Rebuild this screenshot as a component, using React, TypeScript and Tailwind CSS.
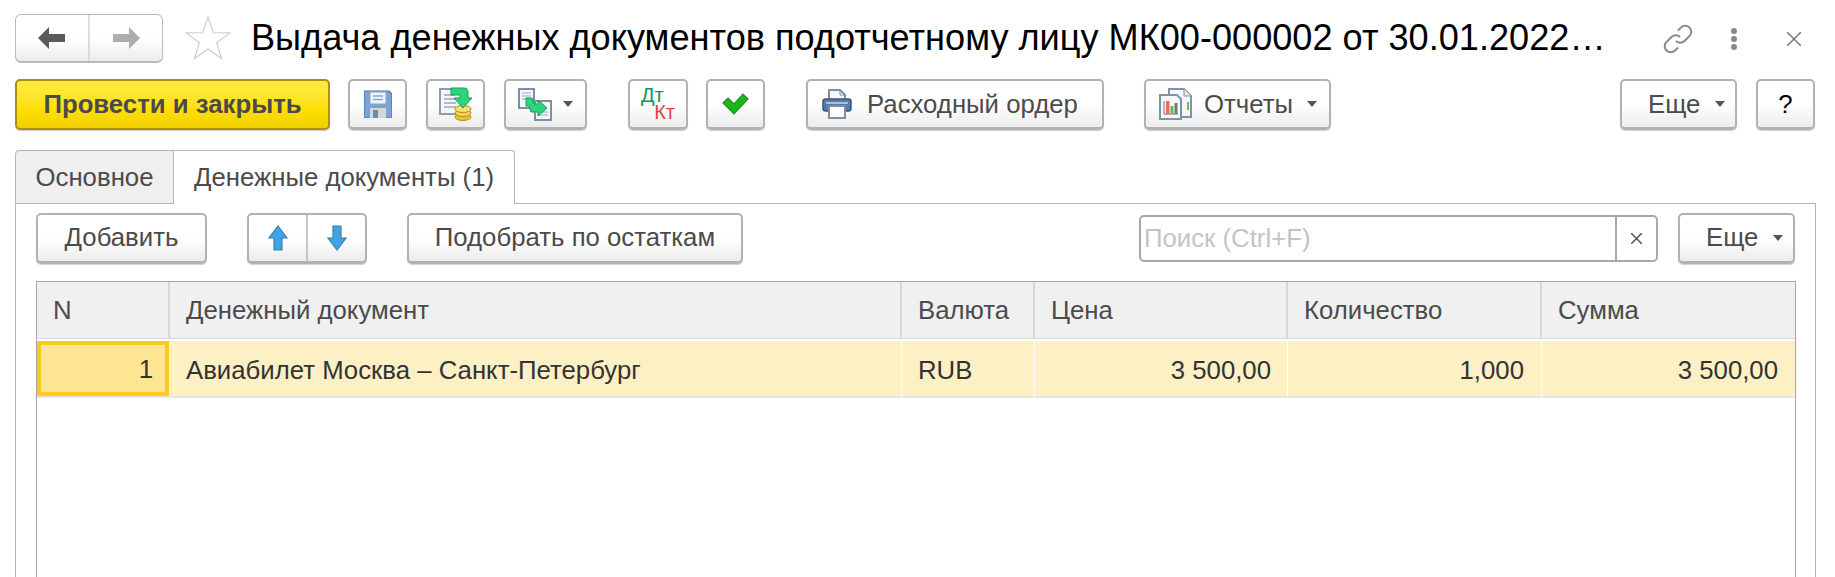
import type { ReactNode } from 'react'

const btn =
  'flex items-center justify-center h-[51px] rounded-[5px] border-2 border-b-[3px] border-[#b2b2b2] bg-gradient-to-b from-white from-50% to-[#ececec] shadow-[0_1px_1px_#d0d0d0] text-[#4b4b4b] text-[25.75px] shrink-0'

function Caret({ className = '' }: { className?: string }) {
  return (
    <svg width="10" height="6" viewBox="0 0 10 6" className={className}>
      <path d="M0 0h10L5 6z" fill="#555" />
    </svg>
  )
}

function Btn({ w, ml = '', children }: { w: string; ml?: string; children: ReactNode }) {
  return <div className={`${btn} ${w} ${ml}`}>{children}</div>
}

function SaveIcon() {
  return (
    <svg width="28" height="28" viewBox="0 0 28 28">
      <path d="M0 1h25l3 3v24H0z" fill="#7ea3d3" stroke="#4a72a8" strokeWidth="1.2" />
      <rect x="6" y="2" width="16" height="12" fill="#eef3fa" stroke="#8aa6cb" />
      <path d="M9 6h10M9 9.500h10" stroke="#8aa6cb" strokeWidth="1.500" />
      <rect x="6" y="18" width="16" height="10" fill="#d3d7da" />
      <rect x="9" y="20" width="5" height="8" fill="#6d8aa8" />
    </svg>
  )
}

function PostIcon() {
  return (
    <svg width="34" height="34" viewBox="0 0 34 34">
      <rect x="1" y="2" width="24" height="25" fill="#f4f6f8" stroke="#8b9bb0" strokeWidth="2" />
      <path d="M5 8h10M5 12h12M5 16h12M5 20h12" stroke="#9aa7b8" strokeWidth="1.500" />
      <ellipse cx="24" cy="30" rx="8" ry="3.500" fill="#e9c23c" stroke="#b28f1e" />
      <ellipse cx="24" cy="26" rx="8" ry="3.500" fill="#f2d652" stroke="#b28f1e" />
      <ellipse cx="24" cy="22" rx="8" ry="3.500" fill="#f7e26d" stroke="#b28f1e" />
      <path d="M12 1h13c3 0 4 2 4 4v6h4l-9 10-9-10h6V8H12z" fill="#2bd67b" stroke="#1b9c58" />
    </svg>
  )
}

function CopyIcon() {
  return (
    <svg width="34" height="33" viewBox="0 0 34 33">
      <rect x="1" y="1" width="15" height="19" fill="#f4f6f8" stroke="#7f8fa3" strokeWidth="2" />
      <path d="M4 5h9M4 8h9M4 11h6" stroke="#9aa7b8" />
      <rect x="17" y="13" width="16" height="19" fill="#f4f6f8" stroke="#7f8fa3" strokeWidth="2" />
      <path d="M21 24h9M21 27h9" stroke="#9aa7b8" />
      <path d="M8 10h6l2 6h4v-4l9 8-9 8v-4h-7l-2-6H8z" fill="#2bd67b" stroke="#1b9c58" />
    </svg>
  )
}

function PrinterIcon() {
  return (
    <svg width="30" height="30" viewBox="0 0 30 30">
      <path d="M7 1h11l5 5v9H7z" fill="#f6f7f9" stroke="#7f8fa3" strokeWidth="2" />
      <path d="M18 1v5h5" fill="none" stroke="#7f8fa3" />
      <rect x="1" y="10" width="28" height="12" rx="2.500" fill="#557aa6" stroke="#38597f" strokeWidth="1.500" />
      <rect x="4" y="13" width="22" height="2" fill="#a9c0da" />
      <rect x="7" y="17" width="16" height="12" fill="#fff" stroke="#7f8fa3" strokeWidth="2" />
    </svg>
  )
}

function ReportIcon() {
  return (
    <svg width="33" height="32" viewBox="0 0 33 32">
      <path d="M10 1h15l7 7v21H10z" fill="#f6f7f9" stroke="#7f93a8" strokeWidth="2" />
      <path d="M25 1v7h7" fill="#e4e8ec" stroke="#7f93a8" />
      <rect x="28" y="14" width="2" height="8" fill="#6cc05a" />
      <path d="M1 7h17l4 4v20H1z" fill="#f6f7f9" stroke="#7f93a8" strokeWidth="2" />
      <path d="M5 13v13h14" fill="none" stroke="#777" />
      <rect x="7" y="13" width="3.500" height="13" fill="#ee6b5d" />
      <rect x="11.500" y="18" width="3" height="8" fill="#63bd4f" />
      <rect x="15.500" y="15" width="3" height="11" fill="#777" />
    </svg>
  )
}

function ArrowV({ down = false }: { down?: boolean }) {
  return (
    <svg width="20" height="26" viewBox="0 0 20 26" className={down ? 'rotate-180' : ''}>
      <path d="M10 1l9 12h-5v12H6V13H1z" fill="#3fa5e6" stroke="#3a7eaa" strokeWidth="1.200" />
    </svg>
  )
}

export default function App() {
  return (
    <div className="w-[1835px] h-[577px] overflow-hidden bg-white font-['Liberation_Sans',Arial,sans-serif] flex flex-col">
      {/* title row */}
      <div className="flex items-center h-[49px] mt-[14px] pl-[15px] shrink-0">
        <div className="flex w-[148px] h-[49px] rounded-[6px] border border-[#b9b9b9] border-b-2 bg-gradient-to-b from-white from-50% to-[#ececec]">
          <div className="w-[74px] flex items-center justify-center border-r-2 border-[#dcdcdc]">
            <svg width="28" height="22" viewBox="0 0 28 22">
              <path d="M0 11L11 0v7h16v8H11v7z" fill="#5a5a5a" />
            </svg>
          </div>
          <div className="flex-1 flex items-center justify-center">
            <svg width="28" height="22" viewBox="0 0 28 22">
              <path d="M28 11L17 0v7H1v8h16v7z" fill="#adadad" />
            </svg>
          </div>
        </div>
        <svg width="48" height="46" viewBox="0 0 48 46" className="ml-[21px]">
          <path d="M24 1l5.300 15.700 16.600.2-13.300 9.900 4.900 15.800L24 33l-13.500 9.600 4.900-15.800L2.100 16.900l16.600-.2z" fill="#fff" stroke="#cfcfcf" strokeWidth="1.200" />
        </svg>
        <div className="ml-[19px] w-[1396px] text-[36.15px] leading-[47px] pb-[2px] text-black whitespace-nowrap">
          Выдача денежных документов подотчетному лицу МК00-000002 от 30.01.2022…
        </div>
        <svg width="30" height="30" viewBox="0 0 30 30" className="ml-[16px]" fill="none" stroke="#8a8a8a" strokeWidth="2">
          <path d="M13 17a6 6 0 0 0 8.500 0l5-5a6 6 0 0 0-8.500-8.500l-3 3" />
          <path d="M17 13a6 6 0 0 0-8.500 0l-5 5a6 6 0 0 0 8.500 8.500l3-3" />
        </svg>
        <div className="ml-[38px] flex flex-col gap-[2px]">
          <div className="size-[6px] rounded-full bg-[#8a8a8a]" />
          <div className="size-[6px] rounded-full bg-[#8a8a8a]" />
          <div className="size-[6px] rounded-full bg-[#8a8a8a]" />
        </div>
        <svg width="14" height="14" viewBox="0 0 14 14" className="ml-[50px]" stroke="#777" strokeWidth="1.500">
          <path d="M0 0l14 14M14 0L0 14" />
        </svg>
      </div>

      {/* command bar */}
      <div className="flex items-center mt-[16px] pl-[15px] shrink-0">
        <div className="flex items-center justify-center w-[315px] h-[51px] rounded-[5px] border-2 border-[#a8920f] bg-gradient-to-b from-[#ffe93f] from-10% via-[#ffdf00] via-60% to-[#efd000] text-[25.75px] font-bold text-[#4a4a4a] shadow-[0_1px_1px_#c8c8c8] shrink-0">
          Провести и закрыть
        </div>
        <Btn w="w-[59px]" ml="ml-[18px]"><SaveIcon /></Btn>
        <Btn w="w-[59px]" ml="ml-[19px]"><PostIcon /></Btn>
        <Btn w="w-[83px]" ml="ml-[19px]">
          <CopyIcon />
          <Caret className="ml-[11px]" />
        </Btn>
        <Btn w="w-[60px]" ml="ml-[41px]">
          <div className="flex flex-col text-[20px] leading-[17px] w-[34px]">
            <span className="text-[#0b9a52]">Дт</span>
            <span className="text-[#e04444] self-end">Кт</span>
          </div>
        </Btn>
        <Btn w="w-[59px]" ml="ml-[18px]">
          <svg width="27" height="22" viewBox="0 0 27 22">
            <path d="M1 10l5-5 6 6L21 1l5 5-14 15z" fill="#14bb14" stroke="#2f8a2f" strokeWidth="1.200" />
          </svg>
        </Btn>
        <Btn w="w-[298px]" ml="ml-[41px]">
          <div className="flex items-center w-full pl-[14px]">
            <PrinterIcon />
            <span className="ml-[15px]">Расходный ордер</span>
          </div>
        </Btn>
        <Btn w="w-[187px]" ml="ml-[40px]">
          <div className="flex items-center w-full pl-[13px]">
            <ReportIcon />
            <span className="ml-[12px]">Отчеты</span>
            <Caret className="ml-[14px]" />
          </div>
        </Btn>
        <Btn w="w-[117px]" ml="ml-[289px]">
          <div className="flex items-center w-full pl-[26px]">
            <span>Еще</span>
            <Caret className="ml-[15px]" />
          </div>
        </Btn>
        <Btn w="w-[59px]" ml="ml-[19px]">
          <span className="text-black">?</span>
        </Btn>
      </div>

      {/* tabs */}
      <div className="flex h-[54px] mt-[20px] ml-[15px] mr-[19px] shrink-0 text-[25.75px] text-[#4b4b4b]">
        <div className="w-[159px] flex items-center justify-center bg-[#efefef] border border-[#b5b5b5] rounded-tl-[4px]">Основное</div>
        <div className="w-[341px] flex items-center justify-center bg-white border-t border-r border-[#b5b5b5] rounded-tr-[4px]">Денежные документы (1)</div>
        <div className="flex-1 border-b border-[#b5b5b5]" />
      </div>

      {/* tab panel */}
      <div className="flex-1 min-h-0 flex flex-col ml-[15px] mr-[19px] border-x border-[#b5b5b5] pl-[20px] pr-[19px] pt-[9px]">
        <div className="flex items-center h-[50px] shrink-0">
          <Btn w="w-[171px]">Добавить</Btn>
          <div className={`${btn} w-[120px] ml-[40px]`}>
            <div className="flex-1 h-full flex items-center justify-center border-r-2 border-[#c8c8c8]"><ArrowV /></div>
            <div className="flex-1 h-full flex items-center justify-center"><ArrowV down /></div>
          </div>
          <Btn w="w-[336px]" ml="ml-[40px]">Подобрать по остаткам</Btn>
          <div className="flex h-[47px] w-[519px] ml-[396px] rounded-[5px] border-2 border-[#a8a8a8] shrink-0">
            <div className="flex-1 flex items-center pl-[3px] text-[25.75px] text-[#c4c4c4]">Поиск (Ctrl+F)</div>
            <div className="w-[41px] flex items-center justify-center border-l-2 border-[#a8a8a8]">
              <svg width="11" height="11" viewBox="0 0 11 11" stroke="#555" strokeWidth="1.500">
                <path d="M0 0l11 11M11 0L0 11" />
              </svg>
            </div>
          </div>
          <Btn w="w-[117px]" ml="ml-[20px]">
            <div className="flex items-center w-full pl-[26px]">
              <span>Еще</span>
              <Caret className="ml-[15px]" />
            </div>
          </Btn>
        </div>

        {/* table */}
        <div className="flex-1 mt-[18px] border-x border-t border-[#a8a8a8] text-[25.75px]">
          <div className="grid grid-cols-[133px_732px_133px_253px_254px_1fr] h-[57px] bg-[#f0f0f0] border-b border-[#d8d8d8] text-[#4b4b4b]">
            <div className="flex items-center pl-[16px] border-r-2 border-[#d8d8d8]">N</div>
            <div className="flex items-center pl-[16px] border-r-2 border-[#d8d8d8]">Денежный документ</div>
            <div className="flex items-center pl-[16px] border-r-2 border-[#d8d8d8]">Валюта</div>
            <div className="flex items-center pl-[16px] border-r-2 border-[#d8d8d8]">Цена</div>
            <div className="flex items-center pl-[16px] border-r-2 border-[#d8d8d8]">Количество</div>
            <div className="flex items-center pl-[16px]">Сумма</div>
          </div>
          <div className="grid grid-cols-[133px_732px_133px_253px_254px_1fr] h-[57px] mt-[2px] bg-[#fdf0c4] border-b-2 border-[#e6e6e6] text-[#333]">
            <div className="flex items-center justify-end pt-[1px] pr-[12px] border-4 border-[#fdc91f] bg-[#fde591] mr-[1px]">1</div>
            <div className="flex items-center pt-[3px] pl-[16px] border-r border-white">Авиабилет Москва – Санкт-Петербург</div>
            <div className="flex items-center pt-[3px] pl-[16px] border-r border-white">RUB</div>
            <div className="flex items-center justify-end pt-[3px] pr-[16px] border-r border-white">3 500,00</div>
            <div className="flex items-center justify-end pt-[3px] pr-[17px] border-r border-white">1,000</div>
            <div className="flex items-center justify-end pt-[3px] pr-[17px]">3 500,00</div>
          </div>
        </div>
      </div>
    </div>
  )
}
